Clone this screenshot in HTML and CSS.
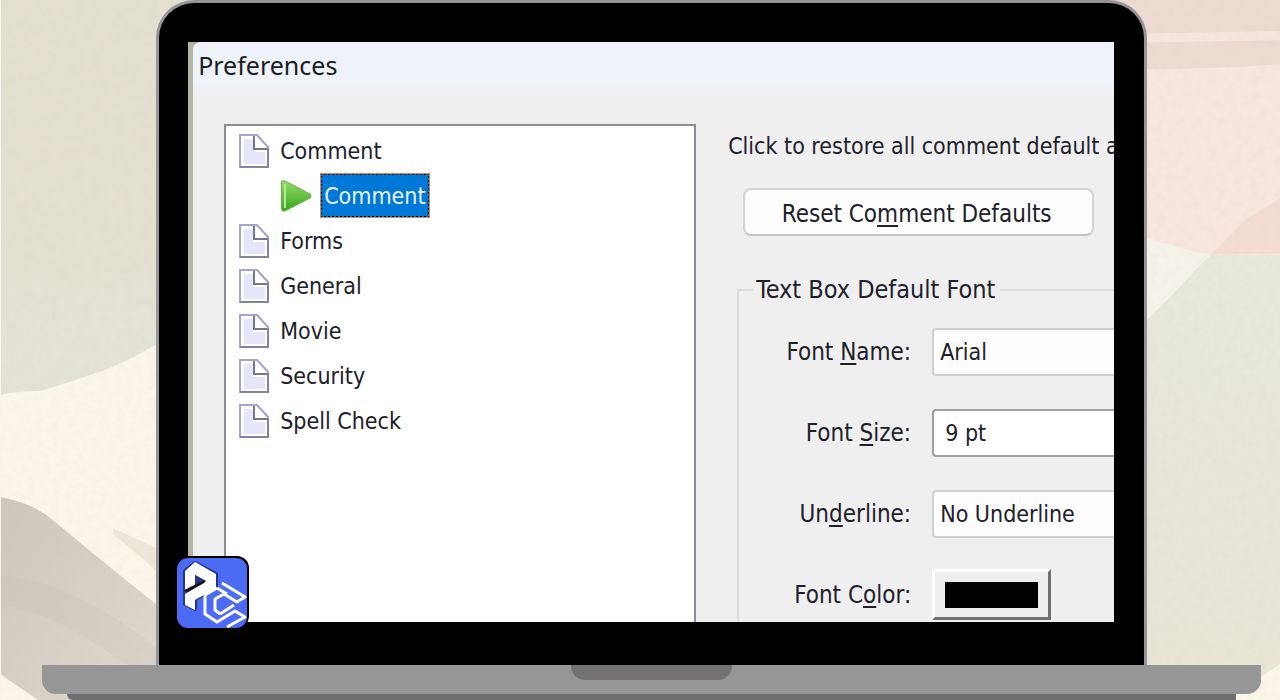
FILE: index.html
```html
<!DOCTYPE html>
<html lang="en">
<head>
<meta charset="utf-8">
<title>Preferences</title>
<link rel="stylesheet" href="styles.css">
</head>
<body>
<svg class="backdrop" viewBox="0 0 1280 700" preserveAspectRatio="none" aria-hidden="true">
  <defs>
    <linearGradient id="sage" x1="0" y1="0" x2="0" y2="1">
      <stop offset="0" stop-color="#e4e0cf"/><stop offset=".5" stop-color="#e4e0d2"/><stop offset="1" stop-color="#e3e3d5"/>
    </linearGradient>
    <linearGradient id="taupe" x1="0" y1="0" x2="1" y2="1">
      <stop offset="0" stop-color="#cdc6bb"/><stop offset=".5" stop-color="#d6cfc4"/><stop offset="1" stop-color="#e0dacf"/>
    </linearGradient>
    <linearGradient id="leaf" x1="0" y1="0" x2="0" y2="1">
      <stop offset="0" stop-color="#e8e9dd"/><stop offset=".5" stop-color="#e8e6da"/><stop offset="1" stop-color="#e8e4d6"/>
    </linearGradient>
    <filter id="paper" x="0" y="0" width="1" height="1">
      <feTurbulence type="fractalNoise" baseFrequency=".12" numOctaves="3" seed="4"/>
      <feColorMatrix values="0 0 0 0 .6  0 0 0 0 .56  0 0 0 0 .48  .5 0 0 0 -.18"/>
    </filter>
  </defs>
  <rect width="1280" height="700" fill="#fcf5ea"/>
  <path d="M0 0H260V300L160 343C145 350 130 360 105 370C80 378 60 386 40 391C25 391 12 392 0 395Z" fill="url(#sage)"/>
  <path d="M113 528L160 550V574Q140 556 113 534Z" fill="#efe6da"/>
  <path d="M0 497C20 501 35 506 50 518C75 538 110 568 160 607V700H38L0 674Z" fill="url(#taupe)"/>
  <path d="M0 575Q70 580 160 650V690Q60 610 0 605Z" fill="#c9c0b5" opacity=".25"/>
  <rect x="1140" width="140" height="330" fill="#f5f3ea"/>
  <path d="M1280 200L1212 254C1190 274 1170 300 1140 326V700H1226L1280 664Z" fill="url(#leaf)"/>
  <path d="M1100 0H1280V255H1212C1185 250 1165 244 1140 235V0Z" fill="#f8e6df"/>
  <path d="M1280 198C1262 210 1250 216 1240 225L1212 254H1280Z" fill="#f3dcd4"/>
  <path d="M1100 0H1280V64Q1210 70 1100 69Z" fill="#eddbd2"/>
  <path d="M1120 34L1280 31V40L1120 43Z" fill="#f6e6de"/>
  <rect width="1280" height="700" filter="url(#paper)" opacity=".4"/>
  <path d="M0 0H1V700H0Z" fill="#f6f4f0"/>
</svg>
<main class="laptop">
  <div class="lid">
    <div class="screen">
      <section class="window" aria-labelledby="window-title">
        <h1 class="titlebar" id="window-title">Preferences</h1>
        <div class="content">
          <ul class="tree">
            <li class="node"><svg class="page" viewBox="0 0 30 34"><use href="#sheet"/></svg>Comment</li>
            <li class="node child">
              <svg class="arrow" viewBox="0 0 32 34"><defs><linearGradient id="green" x1="0" y1="0" x2="0" y2="1"><stop offset="0" stop-color="#96dd68"/><stop offset="1" stop-color="#34a51c"/></linearGradient></defs><path d="M1.500 3Q2 1 5 2L30 15Q32 17 30 19L5 32Q2 33 1.500 30Z" fill="url(#green)" stroke="#63b33c"/><path d="M5 29V5" stroke="#b5ec92" stroke-width="2" fill="none"/></svg>
              <span class="selected">Comment</span>
            </li>
            <li class="node"><svg class="page" viewBox="0 0 30 34"><use href="#sheet"/></svg>Forms</li>
            <li class="node"><svg class="page" viewBox="0 0 30 34"><use href="#sheet"/></svg>General</li>
            <li class="node"><svg class="page" viewBox="0 0 30 34"><use href="#sheet"/></svg>Movie</li>
            <li class="node"><svg class="page" viewBox="0 0 30 34"><use href="#sheet"/></svg>Security</li>
            <li class="node"><svg class="page" viewBox="0 0 30 34"><use href="#sheet"/></svg>Spell Check</li>
          </ul>
          <div class="settings">
            <p class="hint">Click to restore all comment default a</p>
            <button class="reset" type="button">Reset Co<u>m</u>ment Defaults</button>
            <fieldset class="group">
              <legend class="legend">Text Box Default Font</legend>
              <div class="fields">
                <label class="label" for="font-name">Font <u>N</u>ame:</label>
                <select class="field" id="font-name"><option>Arial</option></select>
                <label class="label" for="font-size">Font <u>S</u>ize:</label>
                <input class="field size" id="font-size" type="text" value="9 pt">
                <label class="label" for="underline">Un<u>d</u>erline:</label>
                <select class="field" id="underline"><option>No Underline</option></select>
                <label class="label" for="font-color">Font C<u>o</u>lor:</label>
                <button class="color" id="font-color" type="button" aria-label="Black"><span class="swatch"></span></button>
              </div>
            </fieldset>
          </div>
        </div>
      </section>
    </div>
    <svg class="logo" viewBox="0 0 72 72" role="img" aria-label="PC">
      <rect x="0" y="0" width="72" height="72" rx="12" fill="#000"/>
      <rect x="0" y="2" width="70" height="70" rx="11" fill="#4c6bf5"/>
      <path d="M8 15L18 7L39 18V31L18 43V53L8 48Z" fill="#18204c" stroke="#26358a" stroke-width="4" stroke-linejoin="round"/>
      <path d="M8 15L18 6L39 18V32L18 44V54L8 49V38L27 27V24L18 19V29L8 34Z" fill="#fff"/>
      <path d="M18 19L29 25L18 31Z" fill="#26358a"/>
      <path d="M8 35L28 25" stroke="#111" stroke-width="2"/>
      <path d="M45 27L68 41L60 46L47 38L38 43V54L43 58M40 32L28 39V58L40 66L58 55L68 61L50 71M40 32L50 38M43 58L57 49" fill="none" stroke="#fff" stroke-width="3" stroke-linejoin="round"/>
    </svg>
  </div>
  <div class="base"><div class="deck"><div class="notch"></div></div></div>
  <div class="foot"><div class="underside"></div></div>
</main>
<svg class="symbols" aria-hidden="true">
  <symbol id="sheet" viewBox="0 0 30 34">
    <path d="M1 1H18L29 13V33H1Z" fill="#fff" stroke="#a5a4ca" stroke-width="2"/>
    <path d="M5 5H14V18H26V30H5Z" fill="#e6e6fb"/>
    <path d="M15 2V15H28" fill="none" stroke="#77758f" stroke-width="2"/>
    <path d="M29 14V33H1" fill="none" stroke="#8482a2" stroke-width="2"/>
  </symbol>
</svg>
</body>
</html>
```
FILE: styles.css
```css
* { box-sizing: border-box; }
body {
  margin: 0;
  min-height: 100vh;
  overflow: hidden;
  color: #20202a;
  font: 23px/30px "DejaVu Sans Condensed", "Noto Sans", sans-serif;
}
.backdrop { position: fixed; inset: 0; width: 100%; height: 100%; }
.symbols { position: absolute; width: 0; height: 0; }
.laptop {
  position: relative;
  display: flex;
  flex-direction: column;
  height: 100vh;
}
.lid {
  position: relative;
  display: flex;
  flex: 1;
  min-height: 0;
  margin: 0 10.4% 0 12.2%;
  padding: 39px 30px 43px 29px;
  border: 3px solid #969496;
  border-bottom: 0;
  border-radius: 38px 38px 0 0;
  background: #000;
}
.screen {
  display: flex;
  flex: 1;
  min-width: 0;
  padding-left: 5px;
  overflow: hidden;
  background: linear-gradient(90deg, #b5b5a6, #cfcfc5);
}
.window {
  display: flex;
  flex: 1;
  flex-direction: column;
  min-width: 0;
  border-radius: 8px 0 0 0;
  background: #efefef;
}
.titlebar {
  margin: 0;
  padding: 8px 5px 18px;
  border-radius: 8px 0 0 0;
  background: linear-gradient(#edf3f8 70%, #efefef);
  color: #1b1b1b;
  font: 25px/30px "Noto Sans", sans-serif;
}
.content {
  display: flex;
  flex: 1;
  gap: 32px;
  min-height: 0;
  padding: 26px 0 0 31px;
}
.tree {
  flex: 0 0 472px;
  margin: 0;
  padding: 2px 13px;
  border: solid #8d8f98;
  border-width: 2px 2px 0;
  background: #fff;
  list-style: none;
}
.node {
  display: flex;
  align-items: center;
  gap: 11px;
  height: 45px;
}
.child { gap: 8px; padding-left: 41px; }
.page { width: 30px; height: 34px; }
.arrow { width: 32px; height: 34px; }
.selected {
  padding: 6px 2px 5px;
  border: 2px dotted #000;
  background: #0078d7;
  outline: 1px solid #d98c55;
  outline-offset: -1px;
  color: #e8f4ff;
}
.settings { flex: 1; min-width: 0; overflow: hidden; white-space: nowrap; }
.hint { margin: 7px 0 27px; }
.reset {
  display: block;
  width: 351px;
  height: 48px;
  margin-left: 15px;
  padding: 3px 10px 0 6px;
  border: 2px solid #d4d4d4;
  border-bottom-color: #c2c2c2;
  border-radius: 8px;
  background: #fdfdfd;
  color: inherit;
  font: inherit;
  font-size: 24px;
}
u { text-decoration-thickness: 2px; text-underline-offset: 3px; }
.group {
  min-width: 0;
  height: 400px;
  margin: 39px 0 0 9px;
  padding: 0 0 0 16px;
  border: 2px solid #dcdcdc;
  border-right: 0;
}
.legend { padding: 0 5px 0 3px; margin-left: -2px; font-size: 25px; }
.fields {
  display: grid;
  grid-template-columns: 156px 1fr;
  grid-auto-rows: 81px;
  column-gap: 21px;
  align-items: center;
  margin-top: 6px;
}
.label { text-align: right; font-size: 24px; }
.field {
  width: 100%;
  min-width: 0;
  height: 48px;
  padding: 0 6px;
  appearance: none;
  border: 2px solid #cfcfcf;
  border-right: 0;
  border-radius: 4px 0 0 4px;
  background: #fdfdfd;
  color: inherit;
  font: inherit;
}
.size { padding-left: 11px; border-color: #a0a0a0; background: #fff; }
.color {
  width: 119px;
  height: 51px;
  padding: 10px;
  border: 3px solid;
  border-color: #fff #707070 #707070 #fff;
  background: #efefef;
}
.swatch { display: block; height: 26px; background: #000; }
.logo { position: absolute; left: 18px; bottom: 37px; width: 72px; height: 72px; }
.base { position: relative; padding: 0 1.5% 0 3.3%; }
.deck {
  display: flex;
  justify-content: center;
  height: 29px;
  border-radius: 0 0 14px 14px;
  background: #969696;
}
.notch { width: 161px; height: 15px; border-radius: 0 0 14px 14px; background: #737171; }
.foot { padding: 0 3.4% 0 5.2%; }
.underside { height: 6px; border-radius: 0 0 0 6px; background: #706e6e; }
```
